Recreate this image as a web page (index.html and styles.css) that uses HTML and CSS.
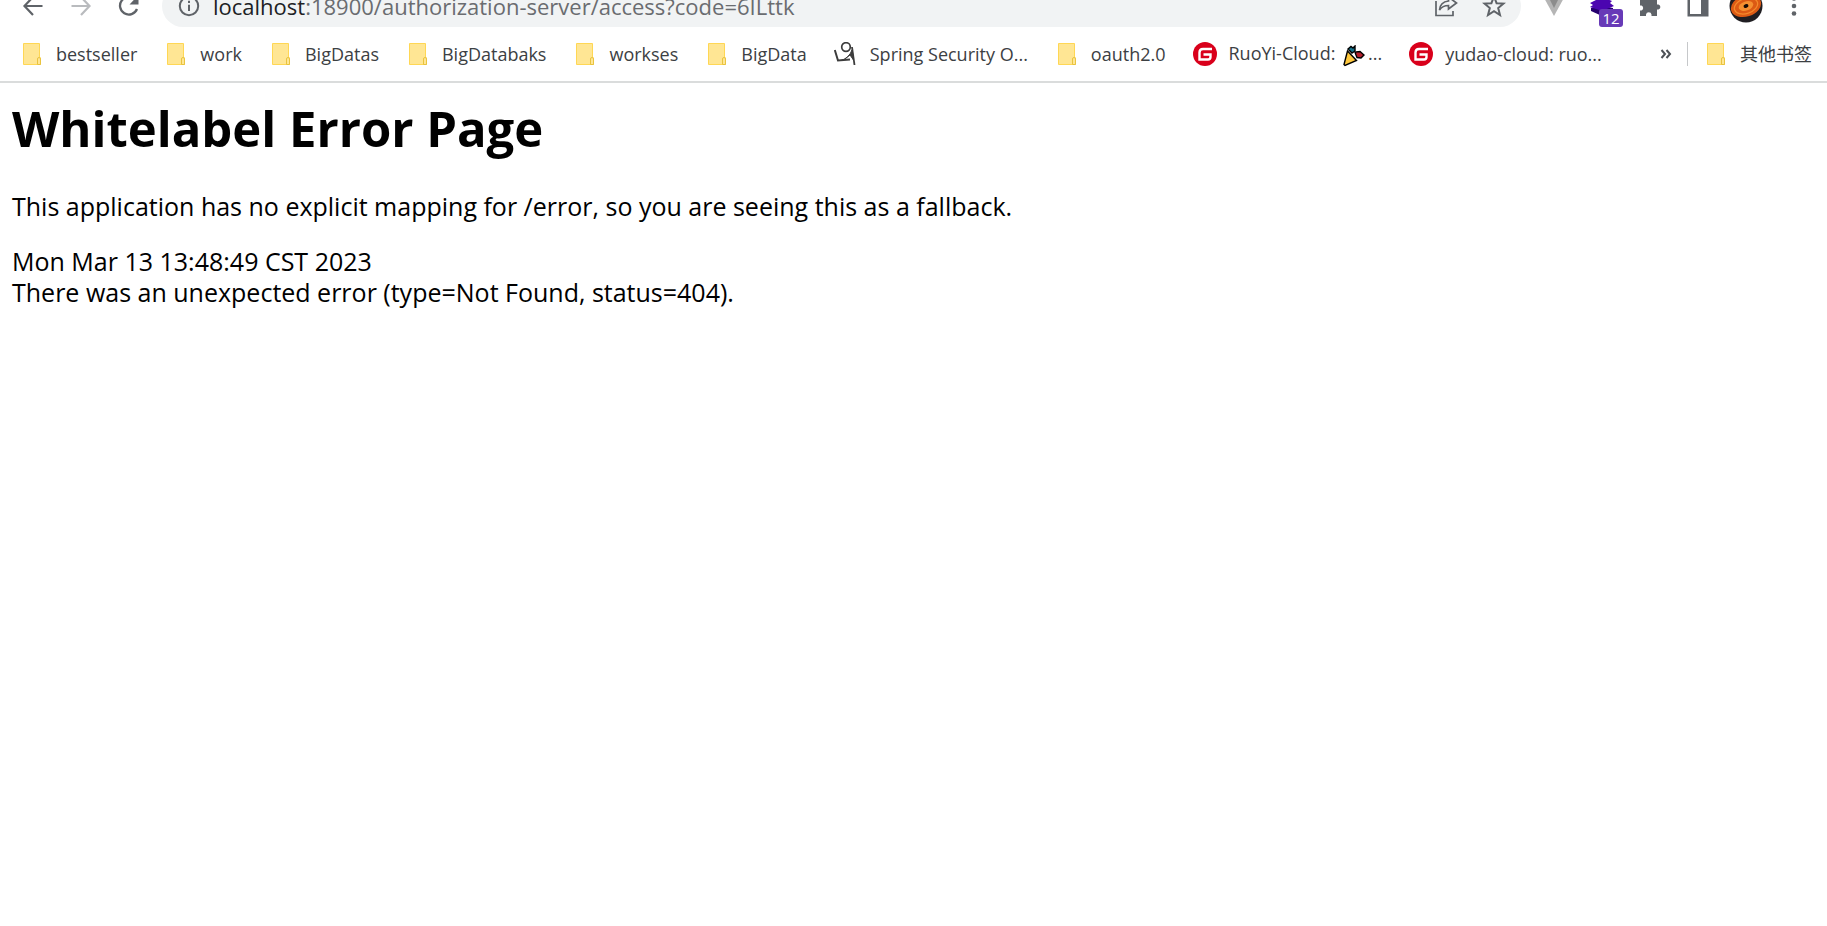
FILE: index.html
```html
<!DOCTYPE html>
<html lang="en">
<head>
<meta charset="utf-8">
<title>Whitelabel Error Page</title>
<link rel="stylesheet" href="styles.css">
</head>
<body>
<svg class="defs" aria-hidden="true">
  <symbol id="folder" viewBox="0 0 24 24">
    <path d="M3.500 1.500H19.500V15L20.500 16V22.500H3.500Z" fill="#ffe694" stroke="#ffd754"/>
    <path d="M17.500 22.500V17Q17.500 15.500 19 15.500T20.500 17V22.500Z" fill="#ffe694" stroke="#e9c33f"/>
  </symbol>
  <symbol id="gitee" viewBox="0 0 24 24">
    <circle cx="12" cy="12" r="12" fill="#d9001b"/>
    <path d="M19 7H10Q6.500 7 6.500 10.500V17.500H15Q17.500 17.500 17.500 15V12.500H10.500" fill="none" stroke="#fff" stroke-width="2.400"/>
  </symbol>
</svg>
<header class="browser">
  <div class="toolbar">
    <nav class="nav" aria-label="History">
      <button class="tool" aria-label="Back"><svg width="24" height="24" viewBox="0 0 24 24" fill="none" stroke="#5f6368" stroke-width="2.200"><path d="M21.500 12H4M12 3L3.500 12L12 21"/></svg></button>
      <button class="tool" aria-label="Forward" disabled><svg width="24" height="24" viewBox="0 0 24 24" fill="none" stroke="#b9bbbe" stroke-width="2.200"><path d="M2.500 12H20M12 3L20.500 12L12 21"/></svg></button>
      <button class="tool" aria-label="Reload"><svg width="24" height="24" viewBox="0 0 24 24"><path d="M20 15A8.800 8.800 0 1 1 18.500 6" fill="none" stroke="#5f6368" stroke-width="2.300"/><path d="M21.500 1V10.500H12.500Z" fill="#5f6368"/></svg></button>
    </nav>
    <div class="address">
      <svg width="22" height="22" viewBox="0 0 22 22" aria-hidden="true"><circle cx="11" cy="11" r="9.200" fill="none" stroke="#5f6368" stroke-width="2"/><path d="M10 5.800h2v2.200h-2zM10 9.800h2v6.200h-2z" fill="#5f6368"/></svg>
      <a class="url" href="#"><span class="host">localhost</span>:18900/authorization-server/access?code=6ILttk</a>
      <button class="tool" aria-label="Share"><svg width="24" height="24" viewBox="0 0 24 24" fill="none" stroke="#5f6368" stroke-width="1.700"><path d="M2 7V21.500H19V17M5.500 16C6 10 9.500 7.500 14.500 7V3L22.500 9L14.500 15V11.500C10.500 11.500 7.500 13 5.500 16Z"/></svg></button>
      <button class="tool" aria-label="Bookmark this page"><svg width="24" height="24" viewBox="0 0 24 24" fill="none" stroke="#5f6368" stroke-width="2"><path d="M12 2.500L14.600 9.200L21.500 9.600L16.200 14L18 21L12 17.200L6 21L7.800 14L2.500 9.600L9.400 9.200Z"/></svg></button>
    </div>
    <div class="extensions">
      <button class="tool" aria-label="Vue devtools"><svg width="24" height="24" viewBox="0 0 24 24"><path d="M1 2H23L12 22Z" fill="#b5b5b5"/><path d="M6 2H18L12 14Z" fill="#8c8c8c"/></svg></button>
      <button class="tool badged" aria-label="Extension, 12 items"><svg width="24" height="24" viewBox="0 0 24 24"><path d="M1 14L12 12L23 14V18L12 22L1 17Z" fill="#25006e"/><path d="M0 9L12 3L22 7L20 9L24 12L12 17L0 13L3 11Z" fill="#4b05b0"/></svg><span class="badge">12</span></button>
      <button class="tool" aria-label="Extensions"><svg width="24" height="24" viewBox="0 0 24 24"><path d="M2 6H7.500V4.500A2.800 2.800 0 0 1 13 4.500V6H19V10.500H20.500A2.600 2.600 0 0 1 20.500 15.500H19V22H13.500V20.500A2.800 2.800 0 0 0 8 20.500V22H2V16.500H3.500A2.700 2.700 0 0 0 3.500 11.500H2Z" fill="#5f6368"/></svg></button>
      <button class="tool" aria-label="Side panel"><svg width="24" height="24" viewBox="0 0 24 24"><path d="M1.500 1.500H22.500V22.500H1.500ZM4 4V20H15V4Z" fill="#5f6368" fill-rule="evenodd"/></svg></button>
      <button class="tool" aria-label="Profile"><svg width="34" height="34" viewBox="0 0 34 34"><circle cx="17" cy="17" r="16.500" fill="#201e22"/><g transform="rotate(-18 17 17)"><ellipse cx="17" cy="17" rx="15.500" ry="10.500" fill="#dc5a14"/><ellipse cx="17" cy="17" rx="12" ry="7.500" fill="none" stroke="#f58a2c" stroke-width="1.200"/><ellipse cx="17" cy="17" rx="7.500" ry="4.500" fill="#f58f30"/><ellipse cx="17" cy="17" rx="2.500" ry="1.800" fill="#170b05"/></g></svg></button>
      <button class="tool" aria-label="Menu"><svg width="24" height="24" viewBox="0 0 24 24" fill="#5f6368"><circle cx="12" cy="4.500" r="2.300"/><circle cx="12" cy="12" r="2.300"/><circle cx="12" cy="19.500" r="2.300"/></svg></button>
    </div>
  </div>
  <nav class="bookmarks" aria-label="Bookmarks">
    <a class="mark" href="#"><svg class="icon"><use href="#folder"/></svg>bestseller</a>
    <a class="mark" href="#"><svg class="icon"><use href="#folder"/></svg>work</a>
    <a class="mark" href="#"><svg class="icon"><use href="#folder"/></svg>BigDatas</a>
    <a class="mark" href="#"><svg class="icon"><use href="#folder"/></svg>BigDatabaks</a>
    <a class="mark" href="#"><svg class="icon"><use href="#folder"/></svg>workses</a>
    <a class="mark" href="#"><svg class="icon"><use href="#folder"/></svg>BigData</a>
    <a class="mark" href="#"><svg class="icon" viewBox="0 0 24 24" fill="none" stroke="#3c3c3c"><circle cx="12" cy="5" r="4.300" stroke-width="1.700"/><path d="M.8 8L4 18.500L16 17.500" stroke-width="2"/><path d="M18 5L20.500 23" stroke-width="1.800"/><path d="M7 18.500C12 17 16 13.500 18 8L19.500 18L16 13L9 18.500Z" fill="#3c3c3c"/></svg>Spring Security O...</a>
    <a class="mark" href="#"><svg class="icon"><use href="#folder"/></svg>oauth2.0</a>
    <a class="mark" href="#"><svg class="icon"><use href="#gitee"/></svg><span>RuoYi-Cloud: <svg class="party" viewBox="0 0 22 22" role="img" aria-label="Party popper" stroke="#000" stroke-width="1.400"><path d="M4.500 6L13.500 15.500L2 20.500L1 19.500Z" fill="#ffc83d"/><path d="M5 4L8 1.500L10 3L12 1V6L9 8Z" fill="#15718a"/><path d="M13 10L12 7L17 6.500L21 10L18 13L14 12.500Z" fill="#b3202c"/></svg>...</span></a>
    <a class="mark" href="#"><svg class="icon"><use href="#gitee"/></svg>yudao-cloud: ruo...</a>
    <button class="more" aria-label="More bookmarks"><svg width="12" height="12" viewBox="0 0 12 12" fill="none" stroke="#4d5156" stroke-width="2"><path d="M1.500 2L5 6L1.500 10M6.500 2L10 6L6.500 10"/></svg></button>
    <a class="mark other" href="#" lang="zh-CN"><svg class="icon"><use href="#folder"/></svg>其他书签</a>
  </nav>
</header>
<main class="page">
  <h1>Whitelabel Error Page</h1>
  <p>This application has no explicit mapping for /error, so you are seeing this as a fallback.</p>
  <div>Mon Mar 13 13:48:49 CST 2023</div>
  <div>There was an unexpected error (type=Not Found, status=404).</div>
</main>
</body>
</html>
```

FILE: styles.css
```css
* { box-sizing: border-box; }
body {
  margin: 0;
  background: #fff;
  color: #000;
  font-family: "Open Sans", "Noto Sans CJK SC", sans-serif;
}
.defs { position: absolute; width: 0; height: 0; }
svg { display: block; flex: none; }
button {
  border: 0;
  padding: 0;
  background: none;
  font: inherit;
}
.browser {
  overflow: hidden;
  border-bottom: 2px solid #dadcdc;
}
.toolbar {
  display: flex;
  align-items: center;
  height: 42px;
  margin-top: -15px;
  padding-right: 9px;
}
.tool {
  display: flex;
  align-items: center;
  justify-content: center;
  flex: none;
  width: 48px;
  height: 42px;
}
.nav {
  display: flex;
  padding: 0 9px;
}
.address {
  display: flex;
  flex: 1;
  align-items: center;
  min-width: 0;
  height: 42px;
  padding: 0 3px 0 16px;
  border-radius: 21px;
  background: #f1f3f4;
}
.url {
  flex: 1;
  min-width: 0;
  margin-left: 13px;
  color: #6a6c70;
  font-size: 22px;
  line-height: 32px;
  text-decoration: none;
  white-space: nowrap;
}
.host { color: #202124; }
.extensions {
  display: flex;
  margin-left: 9px;
}
.badged { position: relative; }
.badge {
  position: absolute;
  right: 3px;
  bottom: 0;
  width: 24px;
  height: 18px;
  border-radius: 3px;
  background: #673ab7;
  color: #fff;
  font-size: 15px;
  line-height: 18px;
}
.bookmarks {
  display: flex;
  align-items: center;
  gap: 27px;
  height: 54px;
  padding: 0 15px 0 20px;
}
.mark {
  display: flex;
  flex: none;
  align-items: center;
  gap: 12px;
  color: #3c4043;
  font-size: 18px;
  line-height: 24px;
  text-decoration: none;
  white-space: nowrap;
}
.icon { width: 24px; height: 24px; }
.party {
  display: inline-block;
  width: 22px;
  height: 22px;
  margin: 0 3px;
  vertical-align: middle;
}
.more {
  margin-left: auto;
  margin-right: -12px;
}
.other {
  height: 24px;
  padding-left: 16px;
  border-left: 1px solid #c6c8ca;
}
.page {
  padding: 13px 12px;
  font-size: 25px;
  line-height: 31px;
}
h1 {
  margin: 0 0 31px;
  font-size: 49px;
  line-height: 64px;
}
p { margin: 0 0 24px; }
```
